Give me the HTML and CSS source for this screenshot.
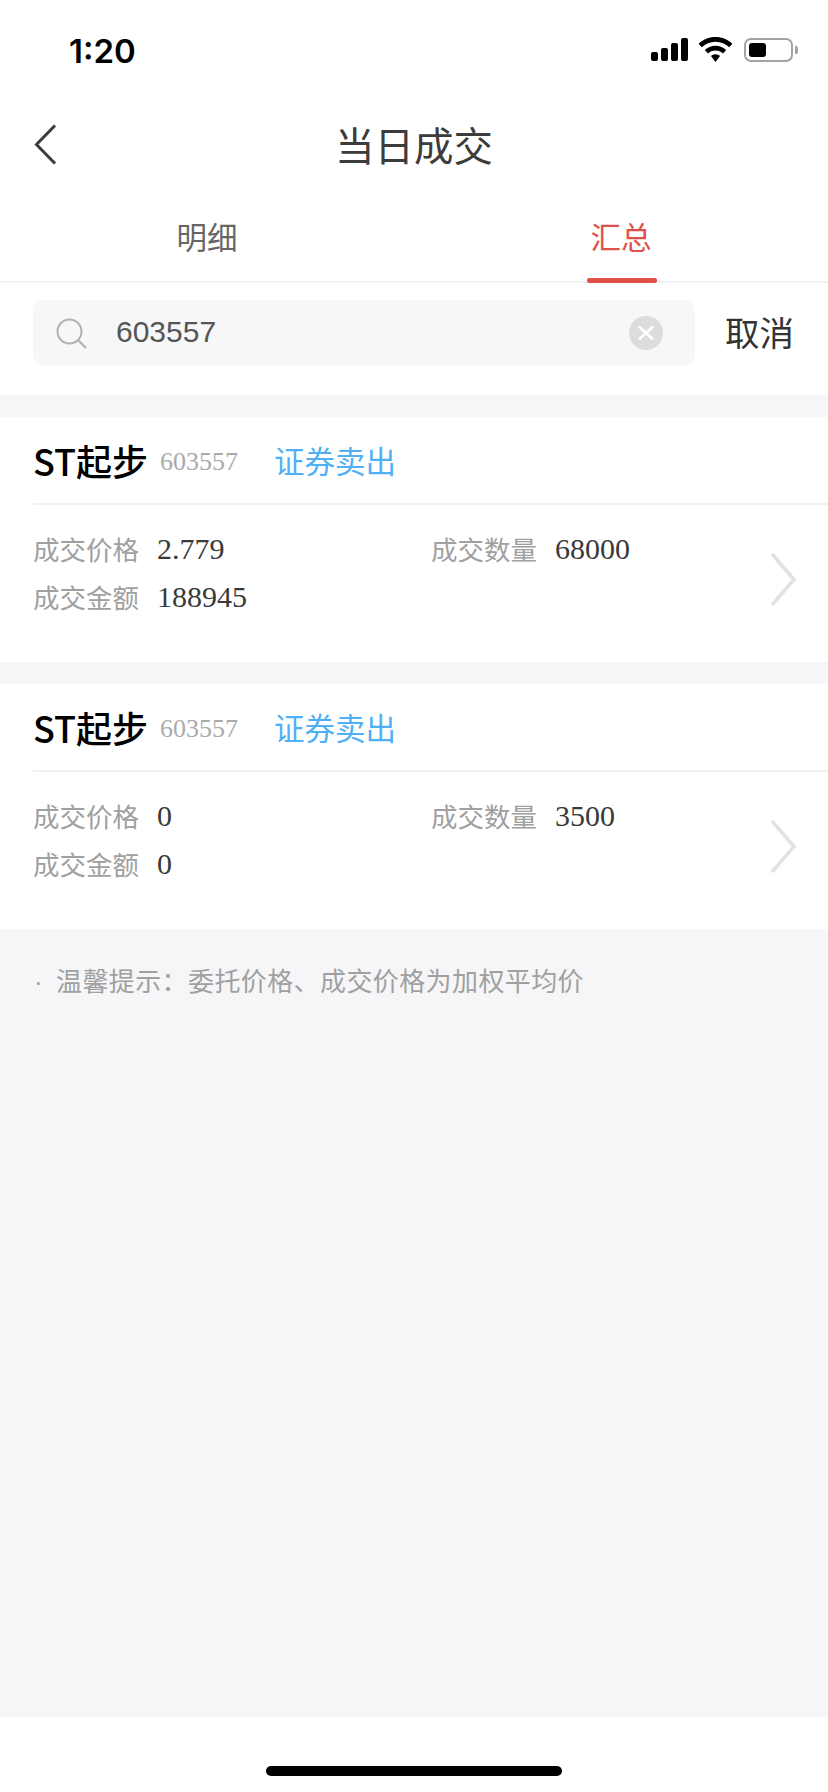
FILE: index.html
```html
<!DOCTYPE html>
<html>
    <head>
        <meta charset="utf-8">
        <meta name="viewport" content="width=device-width, initial-scale=1.0">
        <title>当日成交</title>
        <link rel="stylesheet" href="styles.css">
    </head>
    <body>
        <div class="statusBar">
            <div class="statusTime">1:20</div>
            <div class="statusIcons">
                <svg class="iconSignal" width="37" height="23" viewBox="0 0 37 23">
                    <rect x="0" y="14" width="7" height="9" rx="2"/>
                    <rect x="10" y="10" width="7" height="13" rx="2"/>
                    <rect x="20" y="5" width="7" height="18" rx="2"/>
                    <rect x="30" y="0" width="7" height="23" rx="2"/>
                </svg>
                <svg class="iconWifi" width="35" height="25" viewBox="0 0 35 25">
                    <path d="M17.5 0C10.8 0 5 2.6 0.6 6.8L3.8 10.2C7.4 6.8 12.2 4.7 17.5 4.7S27.6 6.8 31.2 10.2L34.4 6.8C30 2.6 24.2 0 17.5 0Z"/>
                    <path d="M17.5 8.7C13.3 8.7 9.6 10.3 6.8 13L10 16.4C11.9 14.6 14.6 13.4 17.5 13.4S23.1 14.6 25 16.4L28.2 13C25.4 10.3 21.7 8.7 17.5 8.7Z"/>
                    <path d="M17.5 17.3C15.7 17.3 14.2 18 13 19.1L17.5 25L22 19.1C20.8 18 19.3 17.3 17.5 17.3Z"/>
                </svg>
                <div class="battery"><div class="batteryFill"></div></div>
                <div class="batteryNub"></div>
            </div>
        </div>

        <div class="navBar">
            <svg class="navBack" width="23" height="41" viewBox="0 0 23 41">
                <path d="M21 1.5L2.5 20.5L21 39.5" fill="none" stroke="#3c3c3c" stroke-width="3"/>
            </svg>
            <div class="navTitle">当日成交</div>
        </div>

        <div class="tabs">
            <div class="tab">明细</div>
            <div class="tab tabActive">汇总</div>
        </div>

        <div class="searchRow">
            <div class="searchBox">
                <svg class="searchIcon" width="31" height="31" viewBox="0 0 31 31">
                    <circle cx="13.5" cy="13.5" r="12" fill="none" stroke="#b0b0b0" stroke-width="2"/>
                    <path d="M22.5 22.5L30 30" fill="none" stroke="#b0b0b0" stroke-width="2"/>
                </svg>
                <div class="searchText">603557</div>
                <svg class="searchClear" width="34" height="34" viewBox="0 0 34 34">
                    <circle cx="17" cy="17" r="17" fill="#dcdcdc"/>
                    <path d="M10 10.5L24 23.5M24 10.5L10 23.5" fill="none" stroke="#fff" stroke-width="2.4"/>
                </svg>
            </div>
            <div class="searchCancel">取消</div>
        </div>

        <div class="content">
            <div class="card">
                <div class="cardHead">
                    <span class="stockName">ST起步</span>
                    <span class="stockCode">603557</span>
                    <span class="tradeType">证券卖出</span>
                </div>
                <div class="cardBody">
                    <div class="fields">
                        <div class="field"><span class="fieldLabel">成交价格</span><span class="fieldValue">2.779</span></div>
                        <div class="field"><span class="fieldLabel">成交数量</span><span class="fieldValue">68000</span></div>
                        <div class="field"><span class="fieldLabel">成交金额</span><span class="fieldValue">188945</span></div>
                    </div>
                    <svg class="cardArrow" width="27" height="55" viewBox="0 0 27 55">
                        <path d="M2 2L24 27.5L2 53" fill="none" stroke="#e2e2e2" stroke-width="3.5"/>
                    </svg>
                </div>
            </div>

            <div class="card">
                <div class="cardHead">
                    <span class="stockName">ST起步</span>
                    <span class="stockCode">603557</span>
                    <span class="tradeType">证券卖出</span>
                </div>
                <div class="cardBody">
                    <div class="fields">
                        <div class="field"><span class="fieldLabel">成交价格</span><span class="fieldValue">0</span></div>
                        <div class="field"><span class="fieldLabel">成交数量</span><span class="fieldValue">3500</span></div>
                        <div class="field"><span class="fieldLabel">成交金额</span><span class="fieldValue">0</span></div>
                    </div>
                    <svg class="cardArrow" width="27" height="55" viewBox="0 0 27 55">
                        <path d="M2 2L24 27.5L2 53" fill="none" stroke="#e2e2e2" stroke-width="3.5"/>
                    </svg>
                </div>
            </div>

            <div class="tip"><span class="tipDot">·</span>温馨提示：委托价格、成交价格为加权平均价</div>
        </div>

        <div class="homeArea">
            <div class="homeBar"></div>
        </div>
    </body>
</html>
```

FILE: styles.css
```css
* {
    box-sizing: border-box;
}
html, body {
    margin: 0;
    padding: 0;
}
body {
    width: 828px;
    height: 1792px;
    display: flex;
    flex-direction: column;
    overflow: hidden;
    background: #fff;
    font-family: "Noto Sans CJK SC", "Liberation Sans", sans-serif;
    color: #333;
}

.statusBar {
    height: 100px;
    flex: none;
    display: flex;
    justify-content: space-between;
    align-items: flex-start;
    padding: 27px 30px 0 69px;
}
.statusTime {
    font-family: Inter, "Liberation Sans", sans-serif;
    font-size: 33px;
    line-height: 48px;
    font-weight: 600;
    color: #000;
}
.statusIcons {
    display: flex;
    align-items: center;
    padding-top: 10px;
}
.iconSignal {
    fill: #000;
    margin-right: 10px;
}
.iconWifi {
    fill: #000;
    margin-right: 11px;
}
.battery {
    width: 49px;
    height: 24px;
    border: 2px solid #a3a3a3;
    border-radius: 7px;
    padding: 3px;
}
.batteryFill {
    width: 17px;
    height: 14px;
    background: #000;
    border-radius: 3px;
}
.batteryNub {
    width: 3px;
    height: 8px;
    margin-left: 2px;
    background: #a3a3a3;
    border-radius: 0 2px 2px 0;
}

.navBar {
    height: 80px;
    flex: none;
    position: relative;
    display: flex;
    justify-content: center;
    align-items: center;
}
.navBack {
    position: absolute;
    left: 34px;
    top: 24px;
}
.navTitle {
    font-size: 39.5px;
    line-height: 58px;
    margin-top: 8px;
    color: #3c3c3c;
}

.tabs {
    height: 103px;
    flex: none;
    display: flex;
    border-bottom: 2px solid #f2f2f2;
}
.tab {
    flex: 1;
    display: flex;
    justify-content: center;
    padding-top: 33px;
    font-size: 30.5px;
    line-height: 46px;
    color: #666;
}
.tabActive {
    position: relative;
    color: #e2504a;
}
.tabActive::after {
    content: "";
    position: absolute;
    left: 173px;
    bottom: -2px;
    width: 70px;
    height: 5px;
    border-radius: 2px;
    background: #e2504a;
}

.searchRow {
    height: 112px;
    flex: none;
    display: flex;
    padding: 17px 35px 0 33px;
}
.searchBox {
    width: 664px;
    height: 66px;
    display: flex;
    align-items: center;
    padding: 0 32px 0 23px;
    background: #f7f7f7;
    border-radius: 10px;
}
.searchText {
    flex: 1;
    margin-left: 29px;
    margin-top: -3px;
    font-family: "Liberation Sans", sans-serif;
    font-size: 30px;
    color: #555;
}
.searchCancel {
    margin-left: 30px;
    width: 68px;
    height: 66px;
    margin-top: -2px;
    font-size: 34.5px;
    line-height: 66px;
    white-space: nowrap;
}

.content {
    flex: 1;
    background: #f6f6f8;
    padding-top: 22px;
}
.card {
    height: 245px;
    margin-bottom: 22px;
    padding-left: 33px;
    background: #fff;
}
.card:nth-child(2) {
    margin-bottom: 0;
}
.cardHead {
    height: 88px;
    display: flex;
    align-items: center;
    border-bottom: 2px solid #f2f2f2;
}
.stockName {
    font-size: 36px;
    line-height: 50px;
    font-weight: 500;
    color: #000;
}
.stockCode {
    margin-left: 12px;
    margin-top: 4px;
    font-family: "Liberation Serif", serif;
    font-size: 26px;
    color: #aaa;
}
.tradeType {
    margin-left: 36px;
    font-size: 30.5px;
    line-height: 46px;
    color: #4fb0f5;
}
.cardBody {
    display: flex;
    justify-content: space-between;
    padding: 19px 31px 0 0;
}
.fields {
    width: 700px;
    display: grid;
    grid-template-columns: 398px 1fr;
    grid-auto-rows: 48px;
}
.field {
    display: flex;
    align-items: center;
}
.fieldLabel {
    width: 124px;
    font-size: 26.5px;
    color: #a0a0a0;
}
.fieldValue {
    font-family: "Liberation Serif", serif;
    font-size: 30px;
    margin-top: 1px;
    color: #3a3a3a;
}
.cardArrow {
    margin-top: 28px;
}

.tip {
    padding: 28px 0 0 34px;
    font-size: 26px;
    line-height: 46px;
    letter-spacing: 0.4px;
    color: #a0a0a0;
}
.tipDot {
    display: inline-block;
    width: 22px;
    font-family: "Liberation Sans", sans-serif;
}

.homeArea {
    height: 75px;
    flex: none;
    display: flex;
    justify-content: center;
    padding-top: 49px;
    background: #fff;
}
.homeBar {
    width: 296px;
    height: 10px;
    border-radius: 5px;
    background: #000;
}
```
